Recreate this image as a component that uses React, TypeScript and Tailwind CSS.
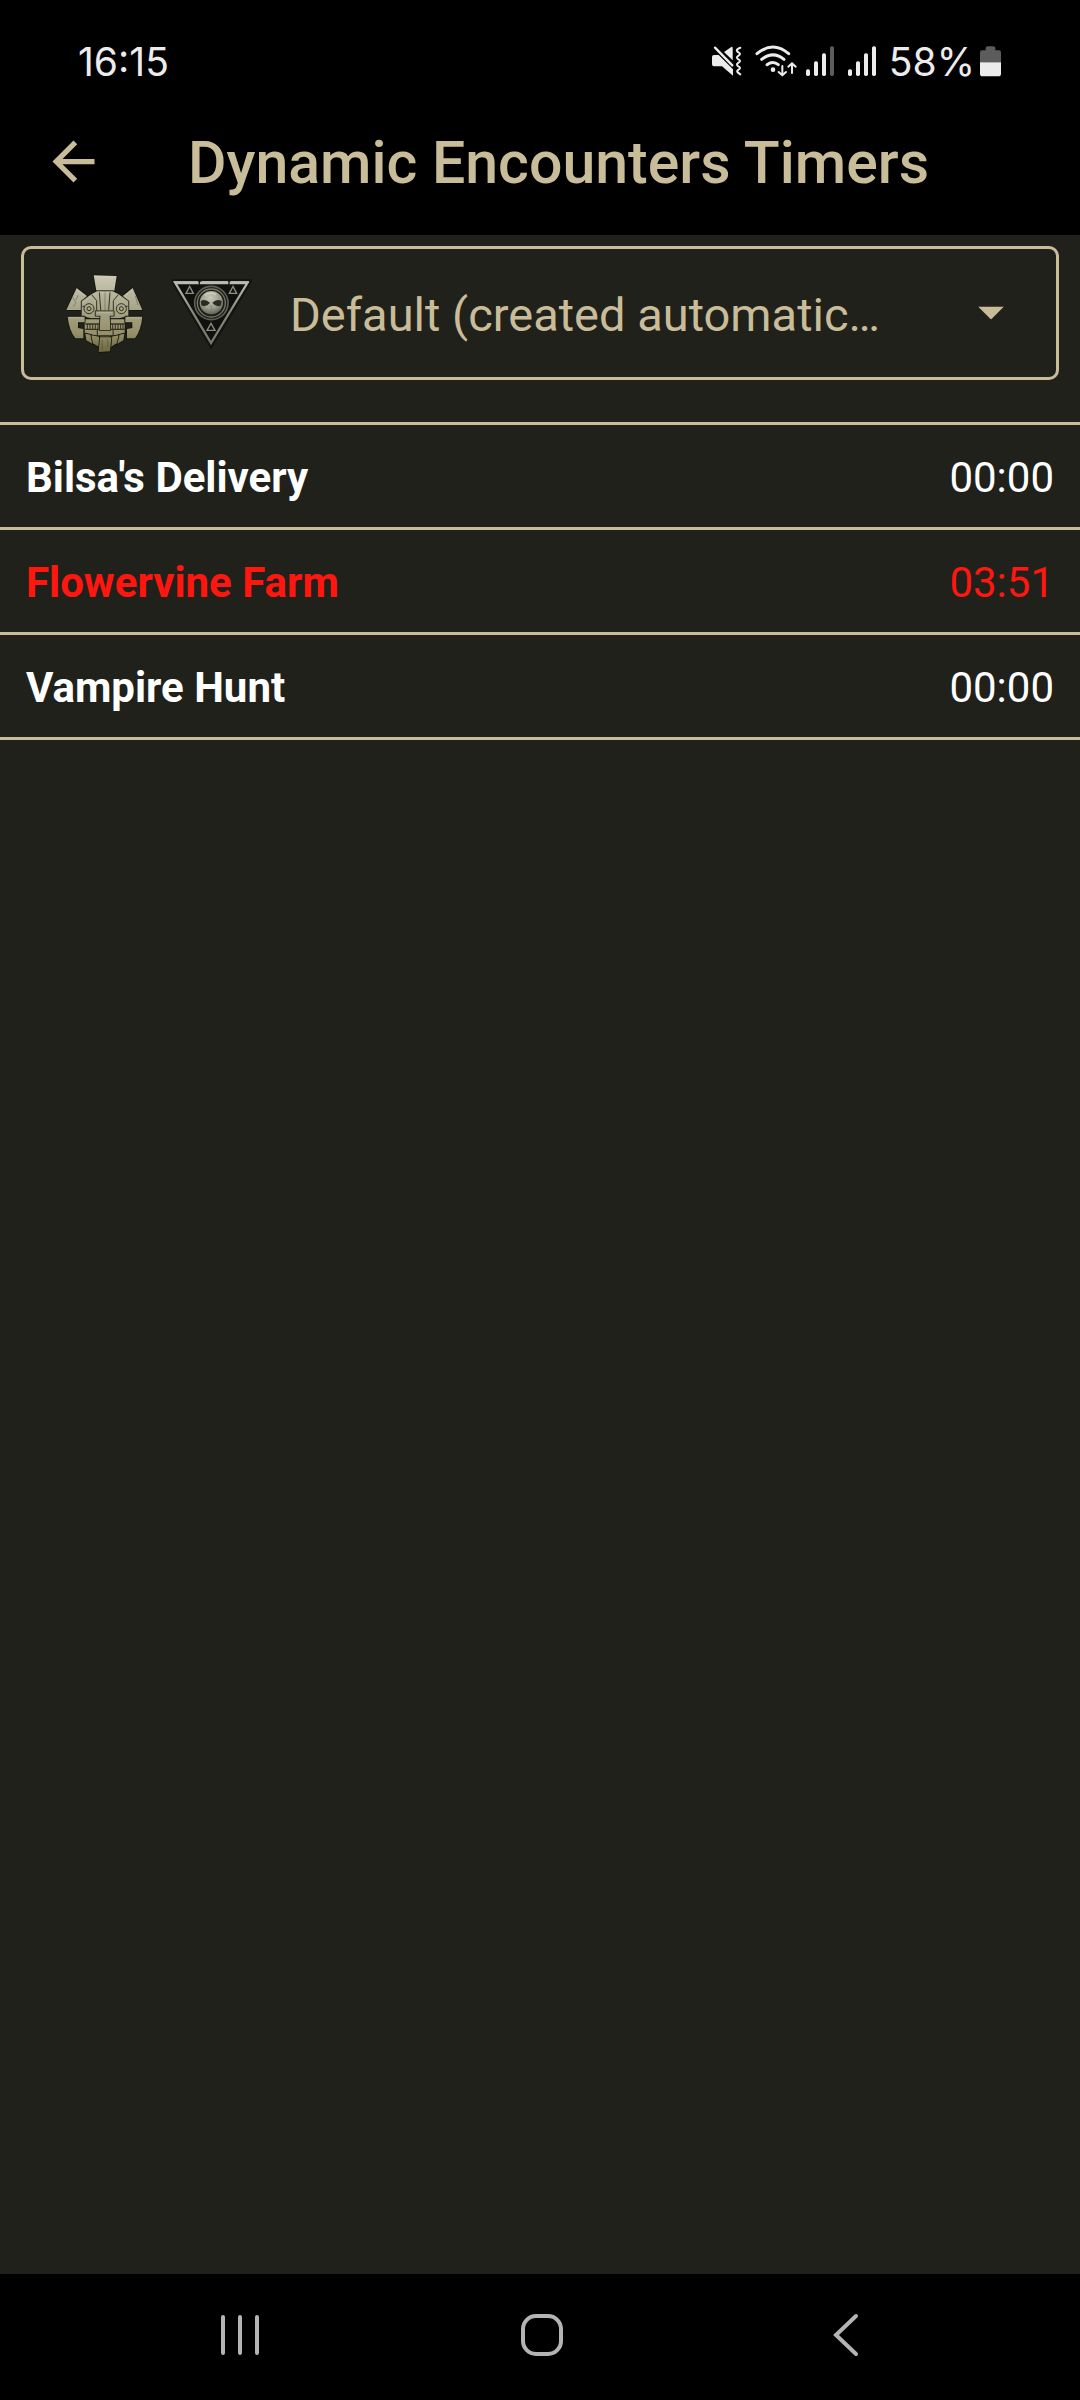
import React, { useState } from 'react';
import { MdArrowBack } from 'react-icons/md';

type Encounter = {
  name: string;
  time: string;
  active: boolean;
};

const encounters: Encounter[] = [
  { name: "Bilsa's Delivery", time: '00:00', active: false },
  { name: 'Flowervine Farm', time: '03:51', active: true },
  { name: 'Vampire Hunt', time: '00:00', active: false },
];

const profiles = ['Default (created automatic…'];

const MutedIcon = () => (
  <svg viewBox="66 46 96 96" className="h-8 w-8" fill="#ececec" aria-hidden="true">
    <path d="M69 82q0-6 6-6h14l43 43v19L99 110H75q-6 0-6-6z" />
    <path d="M105 67l22-15q4-2 4 3v37z" />
    <path d="M78 54l52 53" stroke="#ececec" strokeWidth="7" strokeLinecap="round" />
    <path
      d="M154 54q-7 2-10 6q-2 4 4 8q7 3 4 7l-7 6q-3 4 3 8q7 3 4 7l-7 6q-3 4 3 8q7 3 4 7l-7 6q-3 4 9 11"
      fill="none"
      stroke="#ececec"
      strokeWidth="6"
      strokeLinecap="round"
    />
  </svg>
);

const WifiIcon = () => (
  <svg
    viewBox="198 46 126 96"
    className="h-8 w-[42px]"
    fill="none"
    stroke="#ececec"
    strokeWidth="9"
    strokeLinecap="round"
    strokeLinejoin="round"
    aria-hidden="true"
  >
    <path d="M204 72q48-40 95 0" />
    <path d="M218 89q34-27 67 0" />
    <path d="M234 105q18-13 34 0" />
    <circle cx="252" cy="120" r="7" fill="#ececec" stroke="none" />
    <path d="M280 109v27M269 127l11 10l11-10" strokeWidth="6" />
    <path d="M309 130v-28M298 111l11-10l11 10" strokeWidth="6" />
  </svg>
);

const SignalIcon = ({ full }: { full: boolean }) => (
  <svg viewBox="348 46 90 96" className="h-8 w-[30px]" fill="#ececec" aria-hidden="true">
    <rect x="351" y="119" width="12" height="20" rx="5" />
    <rect x="375" y="95" width="12" height="44" rx="5" />
    <rect x="399" y="71" width="12" height="68" rx="5" />
    <rect x="423" y="50" width="12" height="89" rx="5" fill={full ? '#ececec' : '#5c5c5c'} />
  </svg>
);

const BatteryIcon = () => (
  <svg viewBox="870 46 69 96" className="h-8 w-[23px]" aria-hidden="true">
    <path
      d="M873 98V68q0-6 6-6h11v-6q0-6 6-6h17q6 0 6 6v6h11q6 0 6 6v30z"
      fill="#5c5c5c"
    />
    <path d="M873 98h63v34q0 8-8 8h-47q-8 0-8-8z" fill="#ececec" />
  </svg>
);

const MaskIcon = () => (
  <svg viewBox="45 39 240 240" className="h-20 w-20 shrink-0" aria-hidden="true">
    <defs>
      <linearGradient id="stone" gradientUnits="userSpaceOnUse" x1="0" y1="45" x2="0" y2="278">
        <stop offset="0" stopColor="#cbc9b4" />
        <stop offset="0.45" stopColor="#a6a488" />
        <stop offset="0.75" stopColor="#959069" />
        <stop offset="1" stopColor="#6b663e" />
      </linearGradient>
    </defs>
    <g fill="url(#stone)" stroke="#14150f" strokeWidth="5" strokeLinejoin="round" className="[paint-order:stroke]">
      <path d="M131 46l69 2l-7 44h-54z" />
      <path d="M80 84l31 24l-16 17l-2 25H49z" />
      <path d="M248 84l-30 24l15 17l3 25h41z" />
      <path d="M95 124l30-22l16-8h47l17 8l30 22v44l-28 7h-83l-29-7z" />
      <path d="M104 178h120v44h-17l-9 9h-66l-11-9h-17z" />
      <path d="M53 170h51v17H84v17l16 3v28H76q-19-25-23-65z" />
      <path d="M277 170h-51v17h21v17l-16 3v28h24q18-25 22-65z" />
      <path d="M106 221l18 4l5 28l-20-12z" />
      <path d="M223 221l-18 4l-5 28l20-12z" />
      <path d="M124 226l24 4l4 34l-23-14z" />
      <path d="M206 226l-24 4l-4 34l22-14z" />
      <path d="M150 232h34l-4 42l-34 2z" />
      <path d="M143 210h45v16h-45z" />
      <path d="M137 154h54v13h-12l2 43h-32l2-43h-14z" />
    </g>
    <g fill="none" stroke="#33331f" strokeWidth="3">
      <path d="M125 104l15 18v30M205 104l-15 18v30M148 96l4 54M180 96l-4 54" />
      <path d="M97 139h8M225 139h8" />
      <circle cx="117" cy="146" r="15" />
      <circle cx="117" cy="146" r="6" />
      <circle cx="214" cy="146" r="15" />
      <circle cx="214" cy="146" r="6" />
      <path d="M106 192h42M182 192h42M106 208h42M182 208h42" strokeWidth="4" />
      <path d="M112 192v15M120 192v15M128 192v15M136 192v15M144 192v15M188 192v15M196 192v15M204 192v15M212 192v15M219 192v15" />
      <path d="M165 95v57M157 238v30M173 238v24" strokeWidth="1" />
    </g>
    <g fill="none" stroke="#dedcc5" strokeWidth="2" opacity="0.5">
      <path d="M136 51l58 1M80 90l22 17M247 90l-20 16M100 127l24-19M143 98h42M142 158h44M59 174h40M231 174h40" />
    </g>
    <path d="M68 112l10 16l-8 12M84 106l-6 14M256 108l8 28" fill="none" stroke="#6d6c58" strokeWidth="2" />
  </svg>
);

const TriangleIcon = () => (
  <svg viewBox="36 39 240 240" className="h-20 w-20 shrink-0" aria-hidden="true">
    <defs>
      <linearGradient id="metal" x1="0" y1="0" x2="0" y2="1">
        <stop offset="0" stopColor="#b9bbb2" />
        <stop offset="0.5" stopColor="#85877a" />
        <stop offset="1" stopColor="#77786a" />
      </linearGradient>
      <radialGradient id="orb" cx="0.45" cy="0.3" r="0.75">
        <stop offset="0" stopColor="#c9c9b8" />
        <stop offset="0.6" stopColor="#9a9b8a" />
        <stop offset="1" stopColor="#55564a" />
      </radialGradient>
    </defs>
    <path d="M34 60h242L153 264z" fill="#10110e" stroke="#14150f" strokeWidth="6" strokeLinejoin="round" />
    <path d="M46 69h216L153 249z" fill="none" stroke="url(#metal)" strokeWidth="7" />
    <path d="M40 65h74M124 65h80M211 65h56" stroke="#c4c7c0" strokeWidth="3" />
    <path d="M118 62v12M207 62v12M95 143l12-6M213 143l-10-5" stroke="#171813" strokeWidth="4" />
    <g fill="none" stroke="#8b8d80" strokeWidth="4">
      <path d="M89 79l11 21H78z" />
      <path d="M219 79l11 21h-22z" />
      <path d="M153 190l12 21h-24z" />
    </g>
    <circle cx="154" cy="129" r="53" fill="#1b1c17" />
    <circle cx="154" cy="129" r="50" fill="none" stroke="#5d5f52" strokeWidth="5" />
    <circle cx="154" cy="129" r="42" fill="none" stroke="#77796a" strokeWidth="4" />
    <circle cx="154" cy="128" r="35" fill="url(#orb)" />
    <path d="M122 124q12-10 28 4q-12 16-26 8z" fill="#2b2c24" />
    <path d="M185 124q-12-10-28 4q12 16 26 8z" fill="#2b2c24" />
    <path d="M154 136v22" stroke="#77786a" strokeWidth="2" />
    <path d="M134 106q18-13 35-2" fill="none" stroke="#dddccc" strokeWidth="4" opacity="0.7" />
  </svg>
);

const StatusBar = () => (
  <div className="flex h-[88px] items-center justify-between pt-[34px] pr-[78px] pl-[78px] font-['Inter',sans-serif] text-[39px] leading-none text-[#ececec]">
    <span>16:15</span>
    <div className="flex items-center">
      <MutedIcon />
      <div className="ml-3 flex gap-2">
        <WifiIcon />
        <SignalIcon full={false} />
      </div>
      <div className="ml-3 flex items-center gap-3">
        <SignalIcon full />
        <div className="flex items-center gap-1">
          <span>58%</span>
          <BatteryIcon />
        </div>
      </div>
    </div>
  </div>
);

const NavigationBar = () => (
  <nav className="grid h-[126px] grid-cols-3 place-items-center bg-black pr-[84px] pb-1 pl-[89px]">
    <button type="button" aria-label="Recent apps" className="p-4">
      <svg viewBox="0 0 44 44" className="h-11 w-11" stroke="#b4b4b4" strokeWidth="4" strokeLinecap="round">
        <path d="M5 4v36M22 4v36M39 4v36" />
      </svg>
    </button>
    <button type="button" aria-label="Home" className="p-4">
      <svg viewBox="0 0 44 44" className="h-11 w-11" fill="none" stroke="#b4b4b4" strokeWidth="4">
        <rect x="3" y="3" width="38" height="38" rx="13" />
      </svg>
    </button>
    <button type="button" aria-label="Back" className="p-4">
      <svg
        viewBox="0 0 44 44"
        className="h-11 w-11"
        fill="none"
        stroke="#b4b4b4"
        strokeWidth="4"
        strokeLinecap="round"
      >
        <path d="M33 3L13 22l20 19" />
      </svg>
    </button>
  </nav>
);

const App: React.FC = () => {
  const [profile, setProfile] = useState(profiles[0]);

  return (
    <div className="flex min-h-screen flex-col bg-[#21211c] font-['Roboto',sans-serif]">
      <header className="bg-black text-[#c8bc99]">
        <StatusBar />
        <div className="flex h-[147px] items-center gap-[83px] pl-[42px]">
          <button type="button" aria-label="Go back">
            <MdArrowBack className="size-[63px]" />
          </button>
          <h1 className="pt-1 text-[59px] font-medium whitespace-nowrap">Dynamic Encounters Timers</h1>
        </div>
      </header>

      <main className="flex-1">
        {/* Profile selector */}
        <div className="mx-[21px] mt-[11px] flex h-[134px] items-center rounded-[10px] border-3 border-[#c8bc99] pl-[41px] text-[#c8bc99]">
          <div className="flex gap-[27px]">
            <MaskIcon />
            <TriangleIcon />
          </div>
          <div className="relative ml-[38px] h-full flex-1">
            <select
              aria-label="Profile"
              value={profile}
              onChange={(e) => setProfile(e.target.value)}
              className="h-full w-full appearance-none bg-transparent pt-1 pr-24 text-[47px] outline-none"
            >
              {profiles.map((name) => (
                <option key={name} value={name}>
                  {name}
                </option>
              ))}
            </select>
            <svg
              viewBox="0 0 26 13"
              className="pointer-events-none absolute top-1/2 right-[52px] h-[13px] w-[26px] -translate-y-1/2"
              fill="currentColor"
              aria-hidden="true"
            >
              <path d="M0 0h26L13 13z" />
            </svg>
          </div>
        </div>

        {/* Timers */}
        <ul className="mt-[42px] border-t-3 border-[#c8bc99] text-[42px]">
          {encounters.map((encounter) => (
            <li
              key={encounter.name}
              className={`flex h-[105px] items-center justify-between border-b-3 border-[#c8bc99] px-[26px] pt-[2px] ${
                encounter.active ? 'text-[#ff160f]' : 'text-white'
              }`}
            >
              <span className="font-bold">{encounter.name}</span>
              <time>{encounter.time}</time>
            </li>
          ))}
        </ul>
      </main>

      <NavigationBar />
    </div>
  );
};

export default App;
